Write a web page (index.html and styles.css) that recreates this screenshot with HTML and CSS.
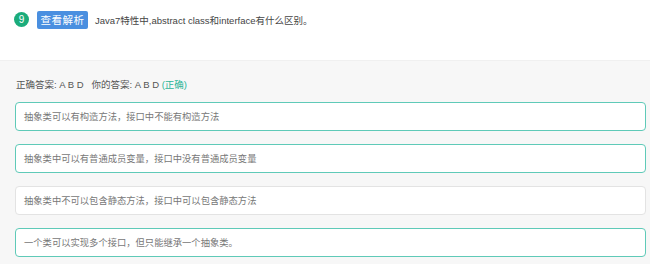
FILE: index.html
```html
<!DOCTYPE html>
<html lang="zh-CN">
<head>
  <meta charset="UTF-8" />
  <title>题目解析</title>
  <link rel="stylesheet" href="styles.css">
</head>
<body>
  <div class="question">
    <span class="num">9</span>
    <button class="btn-analysis">查看解析</button>
    <span class="title">Java7特性中,abstract class和interface有什么区别。</span>
  </div>

  <div class="panel">
    <p class="answer">正确答案: A B D &nbsp;&nbsp;你的答案: A B D <span class="ok">(正确)</span></p>

    <div class="option selected">抽象类可以有构造方法，接口中不能有构造方法</div>
    <div class="option selected">抽象类中可以有普通成员变量，接口中没有普通成员变量</div>
    <div class="option">抽象类中不可以包含静态方法，接口中可以包含静态方法</div>
    <div class="option selected">一个类可以实现多个接口，但只能继承一个抽象类。</div>
  </div>
</body>
</html>
```

FILE: styles.css
```css
body, html {
  margin: 0;
  padding: 0;
  font-family: "Liberation Sans", "Noto Sans CJK SC", sans-serif;
  background: #fff;
  color: #333;
}

.question {
  display: flex;
  align-items: center;
  height: 39px;
  padding: 0 0 0 14px;
}

.num {
  width: 15px;
  height: 15px;
  border-radius: 50%;
  background: #1bac7b;
  color: #fff;
  font-size: 10px;
  display: flex;
  align-items: center;
  justify-content: center;
  margin-right: 8px;
}

.btn-analysis {
  height: 18px;
  width: 51px;
  padding: 0;
  border: none;
  border-radius: 2px;
  background: #4a8fe0;
  color: #fff;
  font-family: "Noto Sans CJK SC", sans-serif;
  font-size: 10.5px;
  letter-spacing: 0.5px;
  margin-right: 7px;
}

.title {
  font-size: 9.5px;
  color: #444;
}

.panel {
  margin-top: 21px;
  background: #f7f7f7;
  border-top: 1px solid #f0f0f0;
  padding: 16px 4px 8px 15px;
  height: 187px;
}

.answer {
  margin: 0 0 11px 1px;
  font-size: 9.5px;
  color: #555;
}

.ok {
  color: #2bb597;
}

.option {
  height: 27px;
  line-height: 27px;
  margin-bottom: 13px;
  padding-left: 8px;
  background: #fff;
  border: 1px solid #e3e3e3;
  border-radius: 4px;
  font-family: "Noto Sans CJK SC", sans-serif;
  font-size: 9.3px;
  color: #777;
}

.option.selected {
  border-color: #5fcab8;
}
```
